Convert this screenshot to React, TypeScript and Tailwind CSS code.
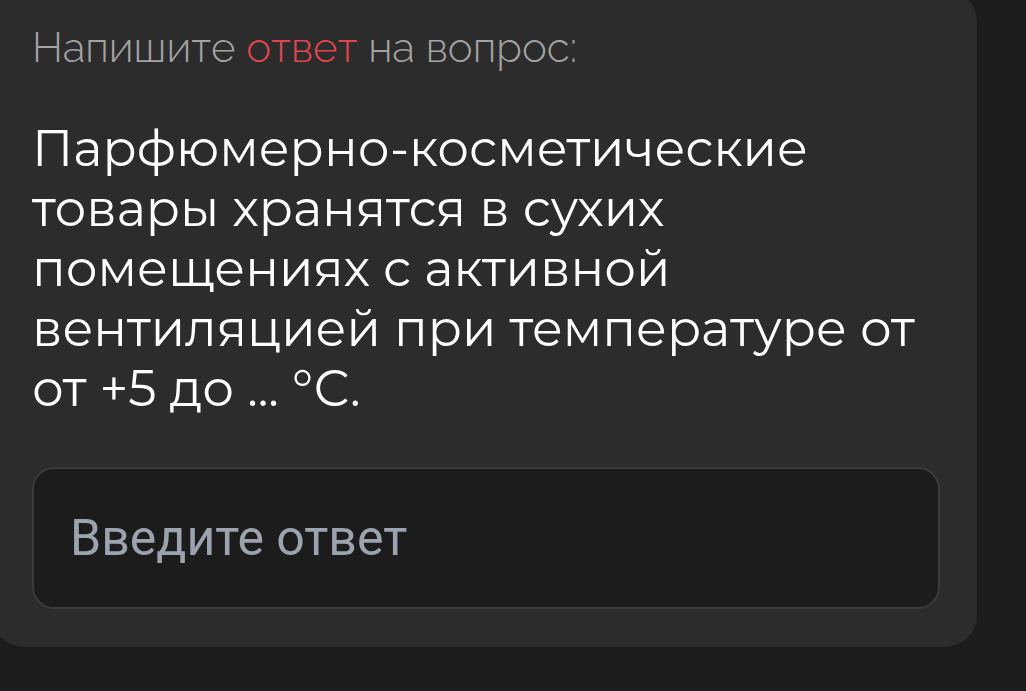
export default function App() {
  return (
    <div className="min-h-[691px] w-full overflow-hidden bg-[#1c1c1c]">
      <div className="-mt-[10px] -ml-[8px] w-[985px] rounded-[32px] bg-[#2c2c2c] pl-[40px] pr-[37px] pt-[34px] pb-[38px]">
        <p
          className="text-[42px] font-light leading-[48px] text-[#a3a3a3]"
          style={{ fontFamily: "Raleway, Roboto, 'Open Sans', sans-serif" }}
        >
          Напишите <span className="text-[#e0464e]">ответ</span> на вопрос:
        </p>
        <p
          className="mt-[47px] text-[50px] leading-[60px] text-white"
          style={{ fontFamily: "Montserrat, 'Open Sans', 'Noto Sans', sans-serif" }}
        >
          Парфюмерно-косметические
          <br />
          товары хранятся в сухих
          <br />
          помещениях с активной
          <br />
          вентиляцией при температуре от
          <br />
          от +5 до ... °С.
        </p>
        <div className="mt-[48px] flex h-[142px] items-center rounded-[22px] border-2 border-[#3c3c3c] bg-[#1c1c1c] px-[36px]">
          <span
            className="text-[50px] text-[#9ca3af]"
            style={{ fontFamily: "Roboto, 'Liberation Sans', sans-serif" }}
          >
            Введите ответ
          </span>
        </div>
      </div>
    </div>
  );
}
